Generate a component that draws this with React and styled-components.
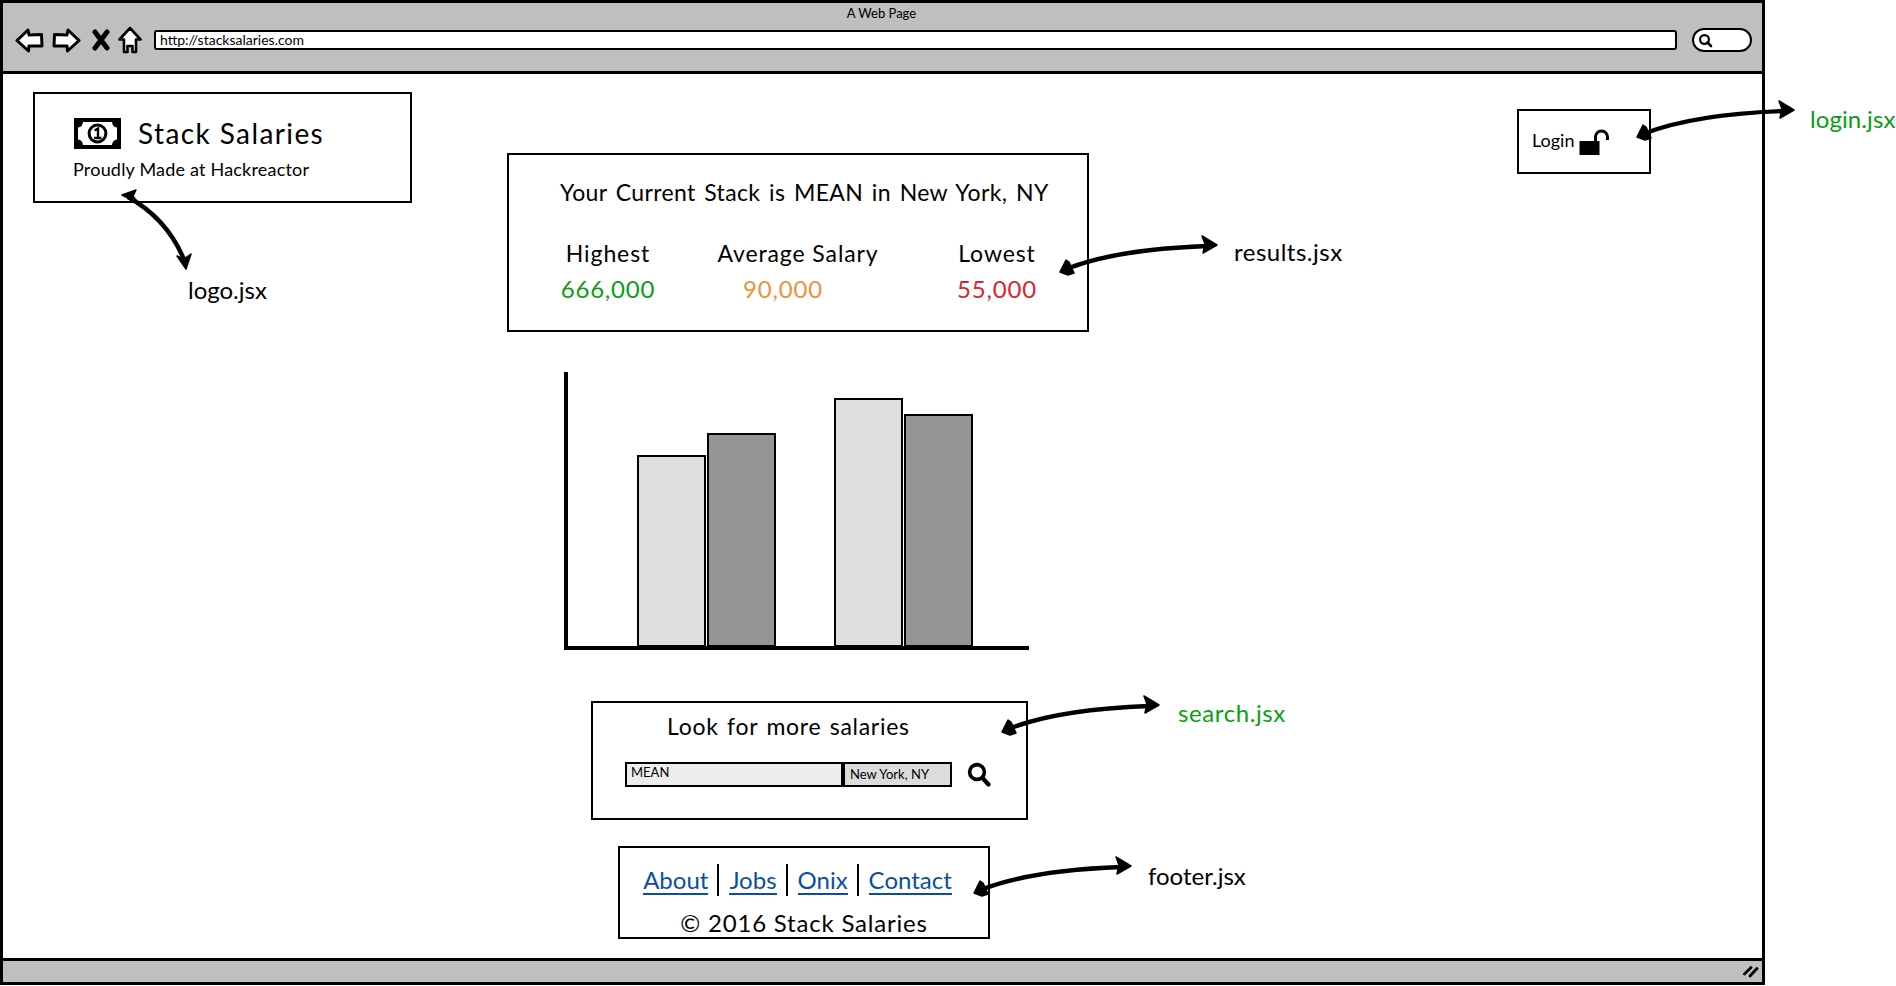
import React from 'react';
import styled, { createGlobalStyle } from 'styled-components';

const FONT = `Lato, "Open Sans", sans-serif`;

const GlobalStyle = createGlobalStyle`
  html, body {
    margin: 0;
    padding: 0;
    background: #ffffff;
  }
  body {
    font-family: ${FONT};
    color: #000000;
    overflow: hidden;
  }
`;

const salaries = [
  { label: 'Highest', value: '666,000', color: '#0a9e12', width: 120, shift: 0 },
  { label: 'Average Salary', value: '90,000', color: '#f0903a', width: 260, shift: -15 },
  { label: 'Lowest', value: '55,000', color: '#d9252c', width: 138, shift: 0 },
];

const bars = [
  { height: 191, tone: '#dedede' },
  { height: 213, tone: '#959595' },
  { height: 248, tone: '#dedede', gap: 57 },
  { height: 232, tone: '#959595' },
];

const links = ['About', 'Jobs', 'Onix', 'Contact'];

const callouts = [
  { name: 'logo.jsx', x: 188, y: 276, spacing: 0 },
  { name: 'results.jsx', x: 1234, y: 238, spacing: 0.5 },
  { name: 'login.jsx', x: 1810, y: 105, spacing: 0.1, green: true },
  { name: 'search.jsx', x: 1178, y: 699, spacing: 0.6, green: true },
  { name: 'footer.jsx', x: 1148, y: 862, spacing: 0 },
];

const BackIcon = ({ flip }) => (
  <svg width="29" height="25" viewBox="0 0 29 25" style={flip ? { transform: 'scaleX(-1)' } : undefined}>
    <path
      d="M2 12.5 L13 2 L14 7 L26.5 6.5 L27 18 L14 18 L13.5 23 Z"
      fill="#fff"
      stroke="#000"
      strokeWidth="3"
      strokeLinejoin="round"
    />
  </svg>
);

const CloseIcon = () => (
  <svg width="18" height="22" viewBox="0 0 18 22">
    <path d="M3 3 L15 19 M15 3 L3 19" stroke="#000" strokeWidth="5" strokeLinecap="round" />
  </svg>
);

const HomeIcon = () => (
  <svg width="24" height="28" viewBox="0 0 24 28">
    <path
      d="M12 2 L22.5 13.5 L18 13.5 L18 26 L14.5 26 L14.5 20 L9.5 20 L9.5 26 L6 26 L6 13.5 L1.5 13.5 Z"
      fill="#fff"
      stroke="#000"
      strokeWidth="2.6"
      strokeLinejoin="round"
    />
  </svg>
);

const PillSearchIcon = () => (
  <svg width="15" height="15" viewBox="0 0 15 15">
    <circle cx="6.5" cy="6.5" r="4.4" fill="none" stroke="#000" strokeWidth="2.2" />
    <path d="M9.5 9.5 L13 13" stroke="#000" strokeWidth="2.6" strokeLinecap="round" />
  </svg>
);

const MoneyIcon = () => (
  <svg width="47" height="31" viewBox="0 0 47 31">
    <rect width="47" height="31" fill="#000" />
    <path
      d="M9 4 L38 4 Q38.5 9 43 9.5 L43 21.5 Q38.5 22 38 27 L9 27 Q8.5 22 4 21.5 L4 9.5 Q8.5 9 9 4 Z"
      fill="#fff"
    />
    <circle cx="23.5" cy="15.5" r="8.4" fill="#fff" stroke="#000" strokeWidth="3" />
    <path d="M20.5 12.5 L24 10.5 L24 20.5 M20 20 L27.5 20" fill="none" stroke="#000" strokeWidth="2.4" />
  </svg>
);

const LockIcon = () => (
  <svg width="30" height="26" viewBox="0 0 30 26">
    <path d="M16.5 12 L16.5 8 A6 6 0 0 1 28.5 8 L28.5 11" fill="none" stroke="#000" strokeWidth="3" />
    <rect x="0.5" y="12" width="20" height="14" fill="#000" />
  </svg>
);

const SearchGlass = () => (
  <svg width="24" height="25" viewBox="0 0 24 25">
    <circle cx="10" cy="10" r="7.4" fill="none" stroke="#000" strokeWidth="3.6" />
    <path d="M15.5 16 L21.5 22.5" stroke="#000" strokeWidth="4.2" strokeLinecap="round" />
  </svg>
);

const GripIcon = () => (
  <svg width="16" height="13" viewBox="0 0 16 13">
    <path d="M1.5 9 L8 2.5 M7 11 L14 3.5" stroke="#000" strokeWidth="2.8" strokeLinecap="round" />
  </svg>
);

// hand drawn double headed connector, drawn once and moved to each box
const Connector = ({ dx, dy }) => (
  <g transform={`translate(${dx} ${dy})`}>
    <path d="M1646 133 C1680 120 1730 113 1784 111" fill="none" stroke="#000" strokeWidth="4.4" />
    <path d="M1794 110 L1779 101 L1782 109 L1780 118 Z" fill="#000" stroke="#000" strokeWidth="1.5" strokeLinejoin="round" />
    <path d="M1637 137 L1643 125 L1646 127 L1651 138 L1645 140 Z" fill="#000" stroke="#000" strokeWidth="1.5" strokeLinejoin="round" />
  </g>
);

const Arrows = () => (
  <ArrowLayer viewBox="0 0 1896 986">
    <Connector dx={0} dy={0} />
    <Connector dx={-577} dy={135} />
    <Connector dx={-635} dy={595} />
    <Connector dx={-663} dy={756} />
    <path d="M128 197 C155 212 174 234 185 262" fill="none" stroke="#000" strokeWidth="4.4" />
    <path d="M122 195 L136 190 L133 196 L138 203 Z" fill="#000" stroke="#000" strokeWidth="1.5" strokeLinejoin="round" />
    <path d="M186 269 L177 256 L184 259 L191 254 Z" fill="#000" stroke="#000" strokeWidth="1.5" strokeLinejoin="round" />
  </ArrowLayer>
);

const App = () => (
  <Page>
    <GlobalStyle />
    <BrowserWindow>
      <TitleBar>
        <Caption>A Web Page</Caption>
        <Toolbar>
          <BackIcon />
          <BackIcon flip />
          <CloseIcon />
          <HomeIcon />
          <UrlBar>http://stacksalaries.com</UrlBar>
          <SearchPill>
            <PillSearchIcon />
          </SearchPill>
        </Toolbar>
      </TitleBar>

      <Canvas>
        <LeftColumn>
          <LogoBox>
            <LogoRow>
              <MoneyIcon />
              <LogoTitle>Stack Salaries</LogoTitle>
            </LogoRow>
            <LogoTagline>Proudly Made at Hackreactor</LogoTagline>
          </LogoBox>
        </LeftColumn>

        <CenterColumn>
          <ResultsBox>
            <ResultsTitle>Your Current Stack is MEAN in New York, NY</ResultsTitle>
            <ResultsRow>
              {salaries.map((item) => (
                <SalaryColumn key={item.label} $width={item.width}>
                  <SalaryLabel>{item.label}</SalaryLabel>
                  <SalaryValue $color={item.color} $shift={item.shift}>{item.value}</SalaryValue>
                </SalaryColumn>
              ))}
            </ResultsRow>
          </ResultsBox>

          <Chart>
            {bars.map((bar, i) => (
              <Bar key={i} $height={bar.height} $tone={bar.tone} $gap={bar.gap} />
            ))}
          </Chart>

          <SearchBox>
            <SearchTitle>Look for more salaries</SearchTitle>
            <SearchRow>
              <StackField>MEAN</StackField>
              <CityField>New York, NY</CityField>
              <SearchGlass />
            </SearchRow>
          </SearchBox>

          <FooterBox>
            <FooterLinks>
              {links.map((link) => (
                <FooterLink key={link} href="#">{link}</FooterLink>
              ))}
            </FooterLinks>
            <Copyright>© 2016 Stack Salaries</Copyright>
          </FooterBox>
        </CenterColumn>

        <RightColumn>
          <LoginBox>
            <LoginText>Login</LoginText>
            <LockIcon />
          </LoginBox>
        </RightColumn>
      </Canvas>

      <StatusBar>
        <GripIcon />
      </StatusBar>
    </BrowserWindow>

    <Arrows />
    {callouts.map((item) => (
      <Callout key={item.name} $x={item.x} $y={item.y} $spacing={item.spacing} $green={item.green}>{item.name}</Callout>
    ))}
  </Page>
);

export default App;

const Page = styled.div`
  position: relative;
  width: 1896px;
  height: 986px;
  overflow: hidden;
`;

const BrowserWindow = styled.div`
  box-sizing: border-box;
  display: flex;
  flex-direction: column;
  width: 1765px;
  height: 985px;
  border: 3px solid #000;
  background: #fff;
`;

const TitleBar = styled.header`
  box-sizing: border-box;
  height: 71px;
  background: #bfbfbf;
  border-bottom: 3px solid #000;
  padding-top: 3px;
`;

const Caption = styled.div`
  text-align: center;
  font-size: 13px;
  line-height: 15px;
  margin-left: -2px;
`;

const Toolbar = styled.div`
  display: flex;
  align-items: center;
  height: 34px;
  padding-left: 12px;
  margin-top: 2px;
  gap: 8px;

  svg:nth-child(3) {
    margin-left: 3px;
  }
`;

const UrlBar = styled.div`
  box-sizing: border-box;
  width: 1523px;
  height: 20px;
  margin-left: 4px;
  padding-left: 4px;
  background: #fff;
  border: 2px solid #000;
  border-radius: 3px;
  font-size: 14px;
  line-height: 15px;
`;

const SearchPill = styled.div`
  box-sizing: border-box;
  display: flex;
  align-items: center;
  width: 60px;
  height: 24px;
  margin-left: 7px;
  padding-left: 4px;
  background: #fff;
  border: 2px solid #000;
  border-radius: 12px;
`;

const Canvas = styled.main`
  flex: 1;
  display: grid;
  grid-template-columns: 504px 690px 1fr;
`;

const LeftColumn = styled.div`
  padding: 18px 0 0 30px;
`;

const CenterColumn = styled.div`
  display: flex;
  flex-direction: column;
  align-items: flex-start;
  padding-top: 79px;
`;

const RightColumn = styled.div`
  display: flex;
  justify-content: flex-end;
  align-items: flex-start;
  padding: 35px 111px 0 0;
`;

const LogoBox = styled.section`
  box-sizing: border-box;
  width: 379px;
  height: 111px;
  padding: 24px 0 0 39px;
  border: 2px solid #000;
`;

const LogoRow = styled.div`
  display: flex;
  align-items: center;
  gap: 17px;
`;

const LogoTitle = styled.h1`
  margin: 0;
  font-size: 28px;
  font-weight: 400;
  line-height: 31px;
  letter-spacing: 1.4px;
`;

const LogoTagline = styled.p`
  margin: 8px 0 0 -1px;
  font-size: 18px;
  line-height: 24px;
  letter-spacing: 0.2px;
`;

const ResultsBox = styled.section`
  box-sizing: border-box;
  width: 582px;
  height: 179px;
  padding: 22px 0 0 51px;
  border: 2px solid #000;
`;

const ResultsTitle = styled.h2`
  margin: 0;
  font-size: 23px;
  font-weight: 400;
  line-height: 30px;
  word-spacing: 2.5px;
  letter-spacing: 0.35px;
`;

const ResultsRow = styled.div`
  display: flex;
  margin: 31px 0 0 -12px;
`;

const SalaryColumn = styled.div`
  display: flex;
  flex-direction: column;
  align-items: center;
  width: ${(p) => p.$width}px;
`;

const SalaryLabel = styled.div`
  font-size: 23px;
  line-height: 30px;
  letter-spacing: 0.9px;
`;

const SalaryValue = styled.div`
  margin-top: 6px;
  font-size: 24px;
  line-height: 30px;
  letter-spacing: 0.8px;
  color: ${(p) => p.$color};
  transform: translateX(${(p) => p.$shift}px);
`;

const Chart = styled.div`
  box-sizing: border-box;
  display: flex;
  align-items: flex-end;
  gap: 1px;
  width: 465px;
  height: 278px;
  margin: 40px 0 0 57px;
  padding-left: 69px;
  border-left: 4px solid #000;
  border-bottom: 4px solid #000;
`;

const Bar = styled.div`
  box-sizing: border-box;
  width: 69px;
  height: ${(p) => p.$height}px;
  margin-left: ${(p) => p.$gap || 0}px;
  background: ${(p) => p.$tone};
  border: 2px solid #000;
  border-bottom-width: 1px;
`;

const SearchBox = styled.section`
  box-sizing: border-box;
  width: 437px;
  height: 119px;
  margin: 51px 0 0 84px;
  padding: 9px 0 0 32px;
  border: 2px solid #000;
`;

const SearchTitle = styled.h3`
  margin: 0 0 0 42px;
  font-size: 23px;
  font-weight: 400;
  line-height: 28px;
  word-spacing: 2px;
  letter-spacing: 0.7px;
`;

const SearchRow = styled.div`
  display: flex;
  align-items: center;
  margin-top: 22px;
`;

const StackField = styled.div`
  box-sizing: border-box;
  width: 218px;
  height: 25px;
  padding: 1px 0 0 4px;
  background: #ededed;
  border: 2px solid #000;
  font-size: 13px;
  line-height: 15px;
`;

const CityField = styled.div`
  box-sizing: border-box;
  width: 109px;
  height: 25px;
  margin-right: 15px;
  padding: 3px 0 0 5px;
  background: #dcdcdc;
  border: 2px solid #000;
  font-size: 13px;
  line-height: 15px;
`;

const FooterBox = styled.footer`
  box-sizing: border-box;
  display: flex;
  flex-direction: column;
  align-items: center;
  width: 372px;
  height: 93px;
  margin: 26px 0 0 111px;
  padding-top: 16px;
  border: 2px solid #000;
`;

const FooterLinks = styled.nav`
  display: flex;
  align-items: center;
  height: 32px;
  margin-left: -14px;
`;

const FooterLink = styled.a`
  padding: 0 9px 0 10px;
  font-size: 24px;
  line-height: 32px;
  color: #0b4f9c;
  text-decoration: none;
  position: relative;

  & + & {
    border-left: 2px solid #000;
  }

  &::after {
    content: '';
    position: absolute;
    left: 10px;
    right: 9px;
    bottom: 1px;
    height: 2px;
    background: #0b4f9c;
  }
`;

const Copyright = styled.div`
  margin-top: 12px;
  font-size: 24px;
  line-height: 30px;
  letter-spacing: 0.8px;
`;

const LoginBox = styled.section`
  box-sizing: border-box;
  display: flex;
  align-items: center;
  gap: 5px;
  width: 134px;
  height: 65px;
  padding: 0 0 0 13px;
  border: 2px solid #000;
`;

const LoginText = styled.span`
  font-size: 18px;
  line-height: 22px;
  margin-top: -3px;
`;

const StatusBar = styled.footer`
  box-sizing: border-box;
  display: flex;
  justify-content: flex-end;
  align-items: center;
  height: 24px;
  padding-right: 3px;
  background: #bfbfbf;
  border-top: 3px solid #000;
`;

const ArrowLayer = styled.svg`
  position: absolute;
  left: 0;
  top: 0;
  width: 1896px;
  height: 986px;
  pointer-events: none;
`;

const Callout = styled.div`
  position: absolute;
  left: ${(p) => p.$x}px;
  top: ${(p) => p.$y}px;
  font-size: 24px;
  line-height: 28px;
  letter-spacing: ${(p) => p.$spacing}px;
  white-space: nowrap;
  color: ${(p) => (p.$green ? '#0a9e12' : '#000')};
`;
